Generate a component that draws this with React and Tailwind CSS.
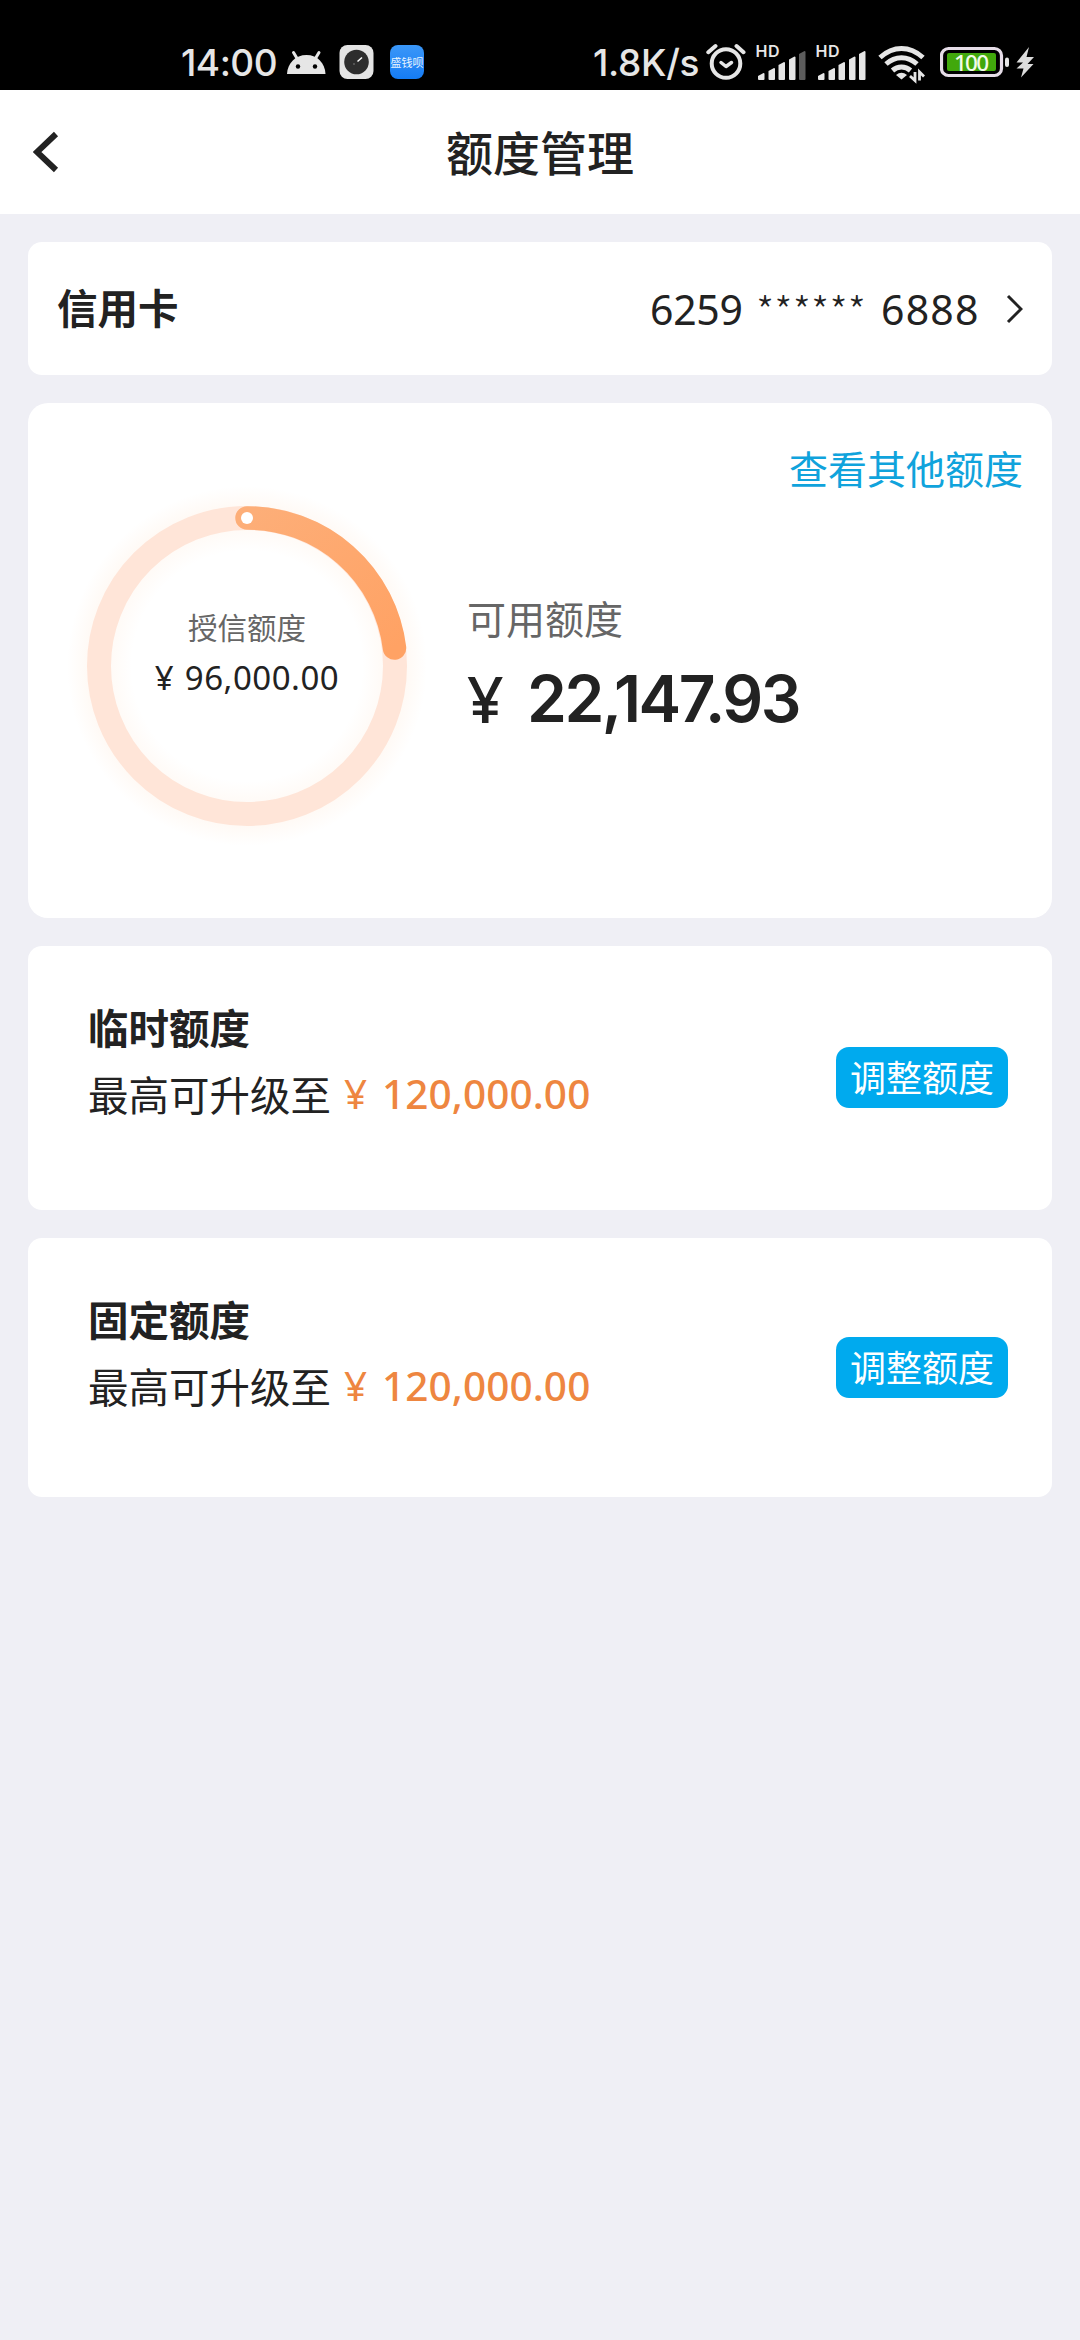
const CJK = 'font-["Noto_Sans_CJK_SC",sans-serif]';
const LATIN = 'font-["Noto_Sans","Noto_Sans_CJK_SC",sans-serif]';
const INTER = 'font-["Inter","Noto_Sans_CJK_SC",sans-serif]';

function Signal({ weak }) {
  const bars = [
    [2, 34, 7], [12.5, 29, 12], [22.5, 23, 18], [33, 17.5, 23.5], [43, 12, 29],
  ];
  return (
    <svg width="52" height="44" viewBox="0 0 52 44" className="block shrink-0">
      <text x="-0.5" y="18" fontSize="16" fontWeight="600" fill="#e6e6e6" textLength="24" className={INTER}>HD</text>
      {bars.map(([x, y, h], i) => (
        <path
          key={x}
          d={`M${x} ${y + 3}L${x + 5.5} ${y}Q${x + 6.5} ${y} ${x + 6.5} ${y + 1}V${y + h - 1}Q${x + 6.5} ${y + h} ${x + 5.5} ${y + h}H${x + 1}Q${x} ${y + h} ${x} ${y + h - 1}Z`}
          fill={weak && i === 4 ? '#5c5c5c' : '#e6e6e6'}
        />
      ))}
    </svg>
  );
}

function StatusBar() {
  return (
    <div className="flex h-[90px] items-start bg-black pt-[40px] text-[#e6e6e6]">
      <div className={INTER + ' ml-[181px] w-[105px] text-[37px] leading-[45px] font-medium tracking-[-0.500px] whitespace-nowrap'}>14:00</div>
      <svg width="40" height="44" viewBox="0 0 40 44" className="block shrink-0">
        <path d="M1 34C1.500 23 9.500 15 20.500 15S39 23 39.500 34Z" fill="#e6e6e6" />
        <path d="M7.500 12.500L12 20M33 12.500L28.500 20" stroke="#e6e6e6" strokeWidth="3" strokeLinecap="round" />
        <circle cx="12" cy="26.500" r="2.200" fill="#000" />
        <circle cx="29" cy="26.500" r="2.200" fill="#000" />
      </svg>
      <svg width="35" height="44" viewBox="0 0 35 44" className="ml-[13px] block shrink-0">
        <rect x="0.500" y="5" width="34" height="34" rx="8" fill="#e4e4e4" />
        <circle cx="17.500" cy="22" r="12.300" fill="#2d2d2d" />
        <path d="M18.500 21.500L23 17.500" stroke="#fff" strokeWidth="1.500" />
        <circle cx="15" cy="24" r="0.700" fill="#999" />
      </svg>
      <div className={CJK + ' mt-[5px] ml-[16px] flex h-[34px] w-[34px] items-center justify-center rounded-[8px] bg-linear-to-b from-[#3a97f8] to-[#147cf5] text-[11px] leading-[12px] font-normal whitespace-nowrap text-[#e8f4ff]'}>盛钱呗</div>
      <div className={INTER + ' ml-[169px] w-[113px] text-[37px] leading-[45px] font-medium tracking-[-0.300px] whitespace-nowrap'}>1.8K/s</div>
      <svg width="40" height="44" viewBox="0 0 40 44" className="block shrink-0">
        <g fill="none" stroke="#e6e6e6" strokeLinecap="round" strokeLinejoin="round">
          <circle cx="20" cy="23.500" r="14.300" strokeWidth="4" />
          <path d="M15 22.500L20 26.500L25.500 22.500" strokeWidth="3.500" />
          <path d="M2.300 12.200L9.500 6M37.500 12.200L30.500 6" strokeWidth="4" />
        </g>
      </svg>
      <div className="-mt-[1px] ml-[10px] flex gap-[8px]">
        <Signal weak />
        <Signal />
      </div>
      <svg width="48" height="44" viewBox="0 0 48 44" className="ml-[10px] block shrink-0">
        <g fill="none" stroke="#e6e6e6" strokeWidth="5">
          <path d="M2 17.500Q12 8.500 23.500 8.500T45 17.500" />
          <path d="M8 24Q15 17.700 23.500 17.700T39 24" />
          <path d="M14.500 30.500Q18.500 27 23.500 27T32.500 30.500" />
        </g>
        <path d="M18 35Q23.500 30.500 29 35L23.500 39.500Z" fill="#e6e6e6" />
        <path d="M37 32V40.500L32 36M41.500 40.500V32L46 36.500" stroke="#e6e6e6" strokeWidth="2.800" fill="none" />
      </svg>
      <svg width="70" height="44" viewBox="0 0 70 44" className="ml-[14px] block shrink-0">
        <rect x="1.500" y="8.500" width="60" height="27" rx="7" fill="none" stroke="#e6dde8" strokeWidth="3.200" />
        <rect x="7" y="13" width="49" height="18" rx="2" fill="#41a80c" />
        <text x="31.500" y="30.500" fontSize="22.500" fontWeight="500" fill="#f2fbe8" textAnchor="middle" textLength="35" className={LATIN}>100</text>
        <rect x="65" y="17.500" width="4" height="9.500" rx="2" fill="#e6e6e6" />
      </svg>
      <svg width="20" height="44" viewBox="0 0 20 44" className="ml-[6px] block shrink-0">
        <path d="M13 7L0.500 22.500H7L0.500 28.500H7.500L5 37.500L17.500 24H11.500L18 17H10.500Z" fill="#dcdcdc" />
      </svg>
    </div>
  );
}

function Header() {
  return (
    <div className="grid h-[124px] grid-cols-[1fr_auto_1fr] items-center bg-white">
      <svg width="26" height="42" viewBox="0 0 26 42" className="ml-[33px] block">
        <path d="M23 3L4 21L23 39" fill="none" stroke="#222" strokeWidth="6" />
      </svg>
      <h1 className={CJK + ' -mt-[3px] text-[47px] leading-[60px] font-medium whitespace-nowrap'}>额度管理</h1>
      <span />
    </div>
  );
}

function Ring() {
  return (
    <svg width="380" height="380" viewBox="0 0 380 380" className="col-start-1 row-start-1 block">
      <defs>
        <radialGradient id="glow" gradientUnits="userSpaceOnUse" cx="190" cy="190" r="180">
          <stop offset="0.640" stopColor="#ffa050" stopOpacity="0" />
          <stop offset="0.760" stopColor="#ffa050" stopOpacity="0.050" />
          <stop offset="0.880" stopColor="#ffa050" stopOpacity="0.060" />
          <stop offset="1" stopColor="#ffa050" stopOpacity="0" />
        </radialGradient>
        <linearGradient id="arc" x1="0" y1="0" x2="1" y2="1">
          <stop offset="0" stopColor="#fdae78" />
          <stop offset="1" stopColor="#ffa264" />
        </linearGradient>
      </defs>
      <circle cx="190" cy="190" r="180" fill="url(#glow)" />
      <circle cx="190" cy="190" r="148" fill="none" stroke="#ffe5d8" strokeWidth="24" />
      <path d="M190 42A148 148 0 0 1 337.500 172" fill="none" stroke="url(#arc)" strokeWidth="23.500" strokeLinecap="round" />
      <circle cx="190" cy="42" r="6" fill="#fff" />
    </svg>
  );
}

function LimitCard({ title, amount, box, action }) {
  return (
    <section className={'flex items-start justify-between rounded-[14px] bg-white pr-[44px] pl-[60px] ' + box}>
      <div className="pt-[51px]">
        <h2 className={CJK + ' text-[40.500px] leading-[60px] font-bold whitespace-nowrap'}>{title}</h2>
        <p className={CJK + ' mt-[7px] flex h-[60px] text-[40.500px] leading-[60px] whitespace-nowrap'}>
          <span>最高可升级至</span>
          <span className={LATIN + ' ml-[13px] w-[38px] text-[#ee8640]'}>¥</span>
          <span className={LATIN + ' font-medium tracking-[0.100px] text-[#ee8640]'}>{amount}</span>
        </p>
      </div>
      <button className={CJK + ' flex h-[61px] w-[172px] items-center justify-center rounded-[13px] bg-[#00aaee] text-[36px] leading-[61px] whitespace-nowrap text-white ' + action}>
        <span className="-mt-[2px]">调整额度</span>
      </button>
    </section>
  );
}

export default function App() {
  return (
    <div className={CJK + ' flex min-h-[2340px] w-[1080px] flex-col bg-[#efeff5] text-[#222]'}>
      <StatusBar />
      <Header />
      <main className="flex flex-col gap-[28px] p-[28px]">
        <section className="flex h-[133px] items-center rounded-[14px] bg-white pr-[29px] pl-[29px]">
          <span className="-mt-[3px] text-[40.500px] leading-[60px] font-bold">信用卡</span>
          <span className={LATIN + ' ml-auto flex text-[41px] leading-[60px] whitespace-nowrap'}>
            <span className="w-[106px] tracking-[-0.300px]">6259</span>
            <span className={CJK + ' w-[125px] font-light tracking-[0.200px]'}>******</span>
            <span className="w-[98px] tracking-[1.200px]">6888</span>
          </span>
          <svg width="17" height="30" viewBox="0 0 17 30" className="ml-[27px] block">
            <path d="M2 2L15 15L2 28" fill="none" stroke="#222" strokeWidth="3" />
          </svg>
        </section>

        <section className="flex h-[515px] flex-col rounded-[20px] bg-white pt-[35px]">
          <a className="mr-[29px] self-end text-[39px] leading-[58px] whitespace-nowrap text-[#10a3dc]">查看其他额度</a>
          <div className="-mt-[20px] ml-[29px] flex">
            <div className="grid">
              <Ring />
              <div className="col-start-1 row-start-1 flex flex-col items-center pt-[128px]">
                <span className="text-[29.500px] leading-[44px] text-[#666]">授信额度</span>
                <span className={LATIN + ' mt-[6px] flex text-[33px] leading-[48px] whitespace-nowrap'}>
                  <span className="w-[30px]">¥</span>
                  <span className="tracking-[0.500px]">96,000.00</span>
                </span>
              </div>
            </div>
            <div className="ml-[30px] flex flex-col pt-[112px]">
              <span className="text-[39px] leading-[58px] text-[#666]">可用额度</span>
              <span className={LATIN + ' mt-[13px] flex text-[64px] leading-[80px] whitespace-nowrap'}>
                <span className="w-[60px] font-medium">¥</span>
                <span className={INTER + ' font-semibold tracking-[-2.500px]'}>22,147.93</span>
              </span>
            </div>
          </div>
        </section>

        <LimitCard title="临时额度" amount="120,000.00" box="h-[264px]" action="mt-[101px]" />
        <LimitCard title="固定额度" amount="120,000.00" box="h-[259px]" action="mt-[99px]" />
      </main>
    </div>
  );
}
